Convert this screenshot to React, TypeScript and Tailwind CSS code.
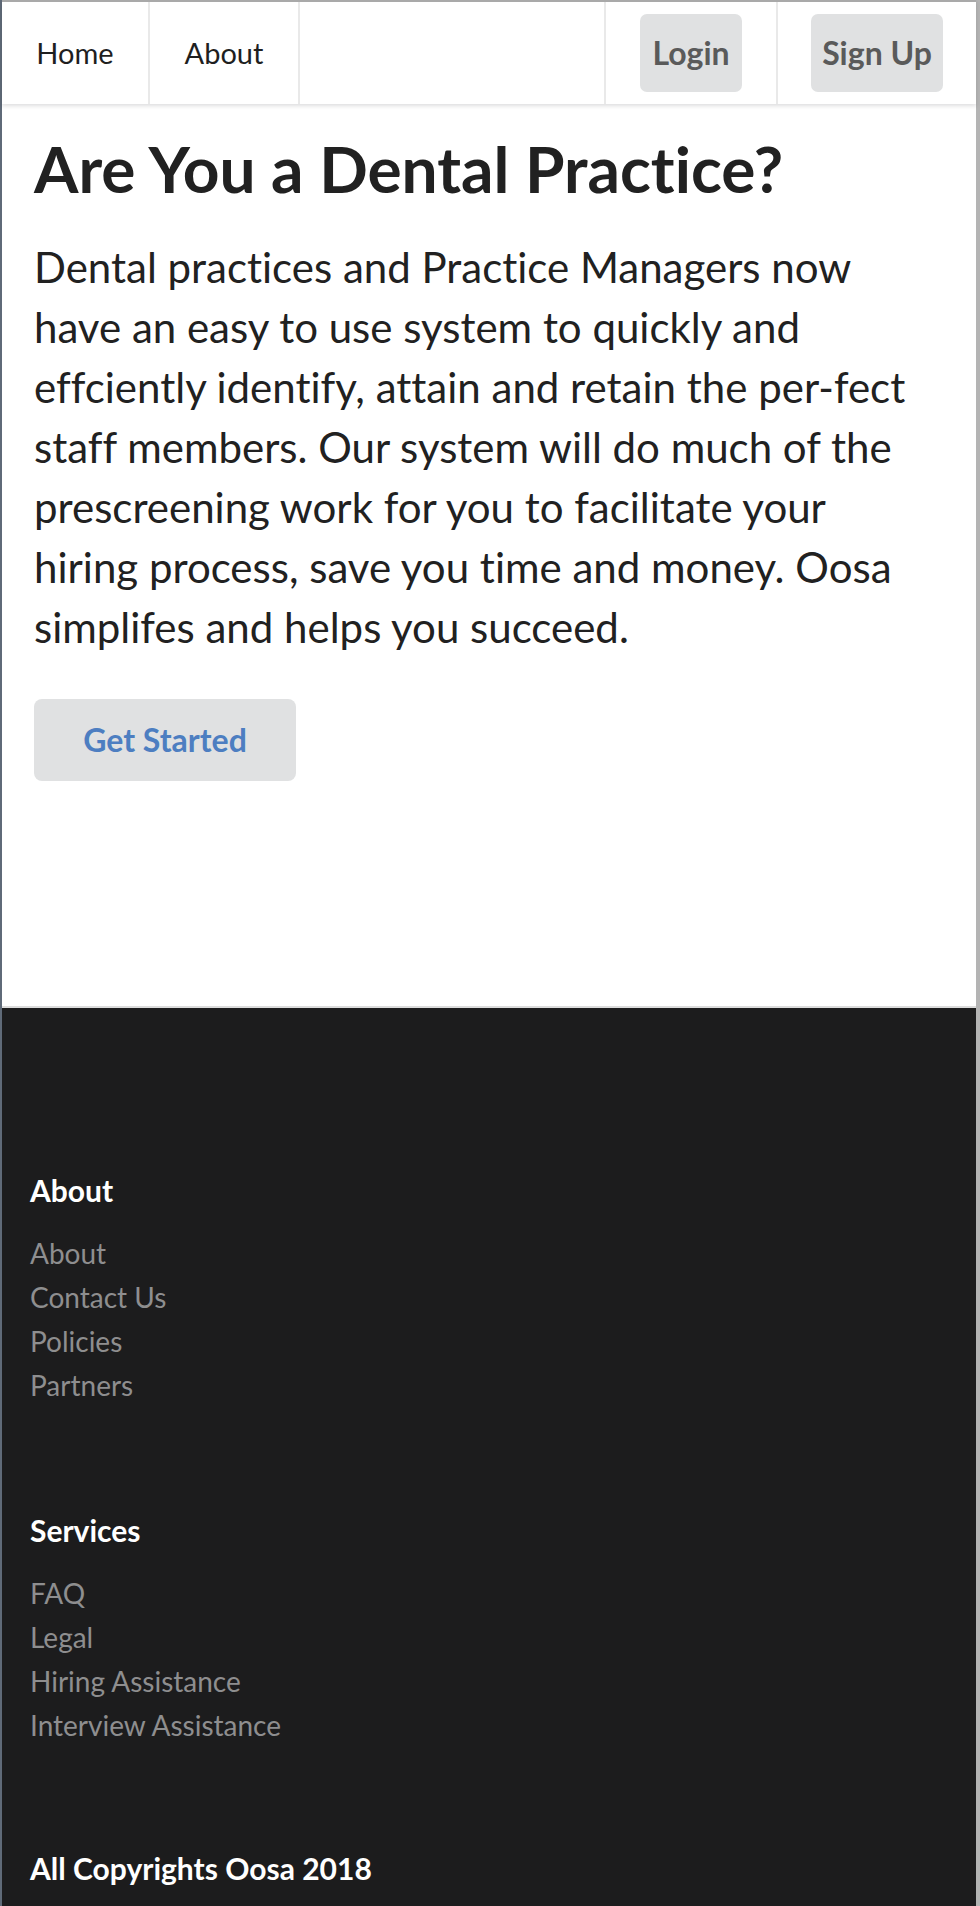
export default function App() {
  return (
    <div className="flex min-h-[1906px] bg-[#b4b4b4] font-['Lato',sans-serif] [font-variant-ligatures:none]">
      {/* window edge */}
      <div className="w-[2px] shrink-0 bg-[#5f6a78]" />

      <div className="flex w-[974px] flex-col bg-white">
        {/* Top Menu */}
        <nav className="relative z-10 flex h-[104px] border-t-2 border-[#a9a9a9] bg-white shadow-[0_2px_4px_0_rgba(34,36,38,0.15)]">
          <a href="#" className="flex w-[148px] items-center justify-center border-r-2 border-[#e9e9e9] text-[29px] text-[#1f1f1f]">
            Home
          </a>
          <a href="#" className="flex w-[150px] items-center justify-center border-r-2 border-[#e9e9e9] text-[29px] text-[#1f1f1f]">
            About
          </a>
          <div className="flex-1" />
          <div className="flex w-[172px] items-center justify-center border-l-2 border-[#e9e9e9]">
            <button className="h-[78px] w-[102px] rounded-[7px] bg-[#e0e1e2] text-[32px] font-bold text-[#5a5a5a]">
              Login
            </button>
          </div>
          <div className="flex w-[200px] items-center justify-center border-l-2 border-[#e9e9e9]">
            <button className="h-[78px] w-[132px] rounded-[7px] bg-[#e0e1e2] text-[32px] font-bold text-[#5a5a5a]">
              Sign Up
            </button>
          </div>
        </nav>

        {/* Hero */}
        <main className="h-[902px] pl-[32px] pr-[46px] pt-[24px] text-[#212121]">
          <h1 className="text-[64px] font-bold leading-[82px]">Are You a Dental Practice?</h1>
          <p className="mt-[27px] text-[42px] leading-[60px]">
            Dental practices and Practice Managers now have an easy to use system to quickly and
            effciently identify, attain and retain the per-fect staff members. Our system will do
            much of the prescreening work for you to facilitate your hiring process, save you time
            and money. Oosa simplifes and helps you succeed.
          </p>
          <button className="mt-[42px] h-[82px] w-[262px] rounded-[8px] bg-[#e0e1e2] text-[32px] font-bold text-[#4d7ec1]">
            Get Started
          </button>
        </main>

        {/* Footer */}
        <footer className="flex-1 border-t-2 border-[#dcdcdc] bg-[#1c1c1d] px-[28px] pb-[17px] pt-[162px]">
          <h4 className="text-[30px] font-bold leading-[40px] text-white">About</h4>
          <ul className="mt-[21px] text-[28px] leading-[44px] text-[#8e8e8f]">
            {["About", "Contact Us", "Policies", "Partners"].map((item) => (
              <li key={item}>{item}</li>
            ))}
          </ul>

          <h4 className="mt-[103px] text-[30px] font-bold leading-[40px] text-white">Services</h4>
          <ul className="mt-[21px] text-[28px] leading-[44px] text-[#8e8e8f]">
            {["FAQ", "Legal", "Hiring Assistance", "Interview Assistance"].map((item) => (
              <li key={item}>{item}</li>
            ))}
          </ul>

          <p className="mt-[101px] text-[30px] font-bold leading-[40px] text-white">
            All Copyrights Oosa 2018
          </p>
        </footer>
      </div>

      <div className="w-[4px] shrink-0 bg-[#b4b4b4]" />
    </div>
  );
}
